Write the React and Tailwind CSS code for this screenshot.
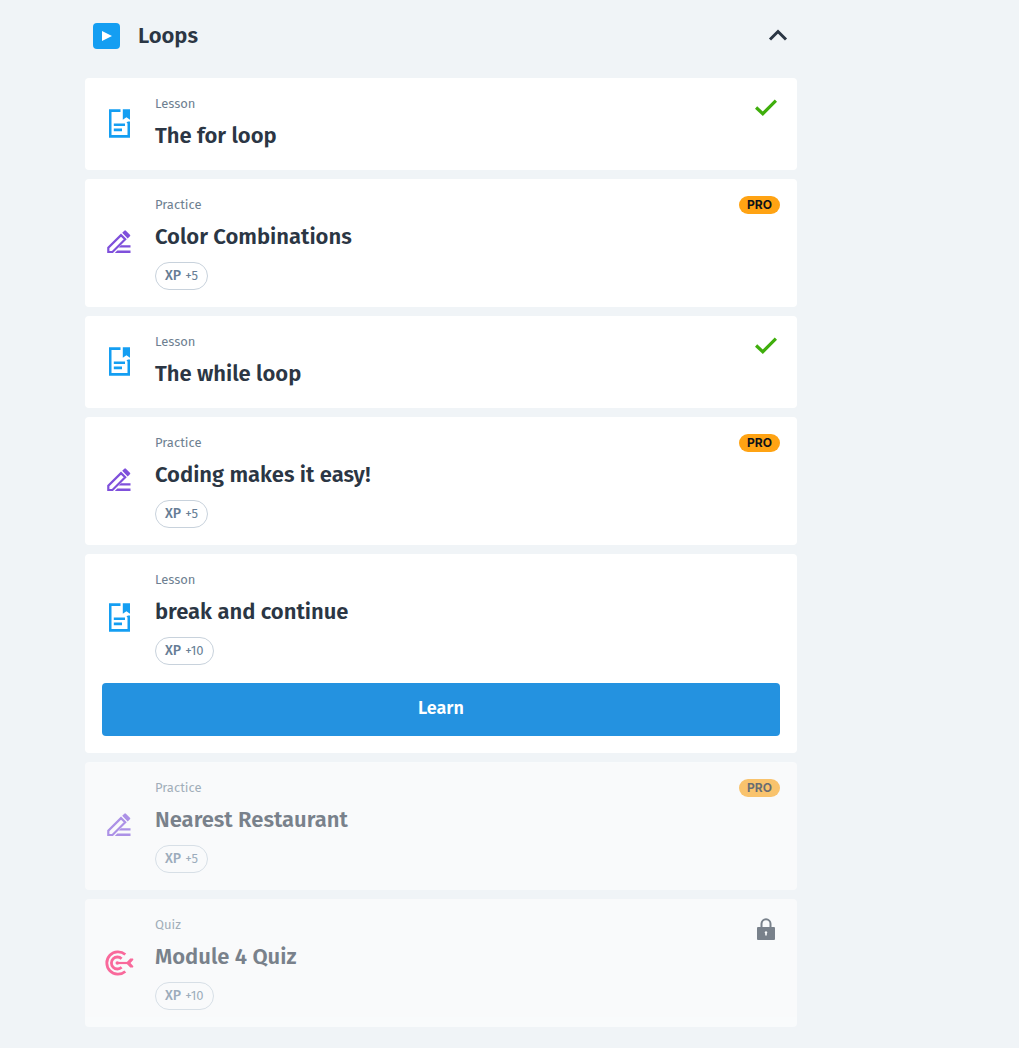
const items = [
  { type: 'Lesson', title: 'The for loop', status: 'done' },
  { type: 'Practice', title: 'Color Combinations', xp: 5, status: 'pro' },
  { type: 'Lesson', title: 'The while loop', status: 'done' },
  { type: 'Practice', title: 'Coding makes it easy!', xp: 5, status: 'pro' },
  { type: 'Lesson', title: 'break and continue', xp: 10, action: 'Learn' },
  { type: 'Practice', title: 'Nearest Restaurant', xp: 5, status: 'pro', locked: true },
  { type: 'Quiz', title: 'Module 4 Quiz', xp: 10, status: 'locked', locked: true },
];

function LessonIcon() {
  return (
    <svg width="22" height="30" viewBox="0 0 22 30" fill="#149ef2" aria-hidden="true">
      <path d="M0 .3h11.500v2.700H2.500v22.900h16V14.500l-1-1 1.500-.9h2v16.200H0z" />
      <path d="M13.800.3H21v10.500l-3.600-2.600-3.600 2.600z" />
      <path d="M4.800 14.400h11.200V17H4.800zM4.800 19.600h8.200v2.600H4.800z" />
    </svg>
  );
}

function PracticeIcon() {
  return (
    <svg width="26" height="26" viewBox="0 0 26 26" aria-hidden="true">
      <path d="M1.300 22v-4.200L14 5.100l4.200 4.200L5.500 22z" fill="none" stroke="#7f50db" strokeWidth="2.200" />
      <path d="M15.200 2.800 17.300.7q.8-.8 1.600 0l4 4q.8.800 0 1.600l-2.200 2.200z" fill="#7f50db" />
      <path d="M14 15.200H23.500v2.400H11.600zM10.300 20.600H23.500v2.500H7.800z" fill="#7f50db" />
    </svg>
  );
}

function QuizIcon() {
  return (
    <svg width="29" height="26" viewBox="0 0 29 26" fill="none" stroke="#ff0e5f" strokeWidth="2.800" aria-hidden="true">
      <path d="M20.300 4.500a11.200 11.200 0 1 0 0 17" />
      <path d="M16.600 8.700a6 6 0 1 0 0 8.600" />
      <path d="M13 13h10" strokeWidth="2.200" />
      <circle cx="12.300" cy="13" r="1.800" fill="#ff0e5f" stroke="none" />
      <path d="M21 13l4.200-4.400h2.800l.4 1.200L25.500 13l2.900 3.200-.4 1.200h-2.800z" fill="#ff0e5f" stroke="none" />
    </svg>
  );
}

const icons = { Lesson: LessonIcon, Practice: PracticeIcon, Quiz: QuizIcon };

function Status({ status }) {
  if (status === 'pro') {
    return (
      <span className="flex h-[18px] items-center rounded-full bg-[#ffa313] px-2 font-[Inter] text-[12px] font-bold text-[#0e121a]">
        PRO
      </span>
    );
  }
  if (status === 'done') {
    return (
      <span className="flex h-[25px] w-7 items-center justify-center" role="img" aria-label="Completed">
        <svg width="22" height="18" viewBox="0 0 22 18" fill="none" stroke="#3fae0c" strokeWidth="3.200">
          <path d="m1.100 8.500 6.700 6.200L20.900 1.700" />
        </svg>
      </span>
    );
  }
  if (status === 'locked') {
    return (
      <span className="flex h-[25px] w-7 items-center justify-center" role="img" aria-label="Locked">
        <svg width="18" height="22" viewBox="0 0 18 22">
          <path d="M4.500 9.500V5.800a4.500 4.500 0 0 1 9 0v3.700" fill="none" stroke="#2b3644" strokeWidth="2" />
          <path fillRule="evenodd" d="M1 9h16q1 0 1 1v11q0 1-1 1H1q-1 0-1-1V10q0-1 1-1zM9 13.200a1.300 1.300 0 0 0-.8 2.300v2h1.600v-2A1.300 1.300 0 0 0 9 13.200z" fill="#2b3644" />
        </svg>
      </span>
    );
  }
  return null;
}

function Card({ item }) {
  const Icon = icons[item.type];
  return (
    <li className={item.locked ? 'rounded bg-white p-[17px] opacity-60' : 'rounded bg-white p-[17px]'}>
      <div className="flex gap-[18px]">
        <div className="flex w-[35px] shrink-0 items-center justify-center">
          <Icon />
        </div>
        <div className="min-w-0 flex-1">
          <p className="text-[13px] leading-[18px] text-[#6e7f91]">{item.type}</p>
          <h3 className="mt-[6px] text-[22px] leading-[34px] font-semibold text-[#2b3644]">{item.title}</h3>
          {item.xp && (
            <span className="mt-2 flex h-7 w-fit items-center gap-1 rounded-full border border-[#c8d2dc] px-[9px] text-[13px] text-[#667d95]">
              <b className="text-[14px] leading-5 font-medium">XP</b>
              <span>+{item.xp}</span>
            </span>
          )}
        </div>
        <div className="shrink-0">
          <Status status={item.status} />
        </div>
      </div>
      {item.action && (
        <button type="button" className="mt-[18px] h-[53px] w-full rounded bg-[#2492e0] pb-[2px] text-[18px] font-semibold text-white">
          {item.action}
        </button>
      )}
    </li>
  );
}

export default function App() {
  return (
    <main className="min-h-screen bg-[#f0f4f7] pr-[222px] pb-5 pl-[85px] font-['Fira_Sans','Noto_Sans',sans-serif]">
      <button type="button" aria-expanded="true" className="flex h-[78px] w-full items-center pr-[9px] pb-[6px] pl-2 text-left">
        <span className="flex h-[26px] w-[27px] items-center justify-center rounded bg-[#149ef2]">
          <svg width="10" height="10" viewBox="0 0 10 10" fill="white" aria-hidden="true">
            <path d="M0 0 10 5 0 10z" />
          </svg>
        </span>
        <span className="ml-[18px] flex-1 text-[22px] leading-7 font-semibold text-[#2b3644]">Loops</span>
        <svg width="20" height="14" viewBox="0 0 20 14" fill="none" stroke="#2b3644" strokeWidth="3" aria-hidden="true">
          <path d="m2 10.500 8-8 8 8" />
        </svg>
      </button>
      <ul className="flex flex-col gap-[9px]">
        {items.map((item) => (
          <Card key={item.title} item={item} />
        ))}
      </ul>
    </main>
  );
}
